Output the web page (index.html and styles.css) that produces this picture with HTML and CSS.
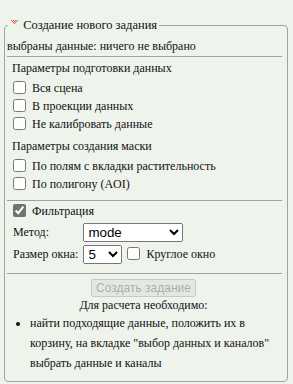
FILE: index.html
```html
<!DOCTYPE html>
<html>
<head>
    <meta charset="UTF-8">
    <meta name="viewport" content="width=device-width, initial-scale=1.0">
    <title>Создание нового задания</title>
    <link rel="stylesheet" href="styles.css">
</head>
<body>
    <div class="wrapper">
        <fieldset class="task-box">
            <legend class="task-legend">
                <svg class="toggle-icon" width="8" height="5" viewBox="0 0 8 5" shape-rendering="crispEdges">
                    <rect x="0" y="0" width="1" height="1" fill="#e8453c"/>
                    <rect x="2" y="0" width="1" height="1" fill="#e8453c"/>
                    <rect x="4" y="0" width="1" height="1" fill="#e8453c"/>
                    <rect x="6" y="0" width="1" height="1" fill="#e8453c"/>
                    <rect x="1" y="1" width="1" height="1" fill="#e8453c"/>
                    <rect x="3" y="1" width="1" height="1" fill="#e8453c"/>
                    <rect x="5" y="1" width="1" height="1" fill="#e8453c"/>
                    <rect x="2" y="2" width="1" height="1" fill="#e8453c"/>
                    <rect x="4" y="2" width="1" height="1" fill="#e8453c"/>
                    <rect x="3" y="3" width="1" height="1" fill="#e8453c"/>
                </svg>
                Создание нового задания
            </legend>

            <div class="selected">выбраны данные: ничего не выбрано</div>
            <hr class="sep">

            <div class="section">
                <div class="section-title">Параметры подготовки данных</div>
                <label class="check-row"><input type="checkbox"> Вся сцена</label>
                <label class="check-row"><input type="checkbox"> В проекции данных</label>
                <label class="check-row"><input type="checkbox"> Не калибровать данные</label>
            </div>

            <div class="section">
                <div class="section-title">Параметры создания маски</div>
                <label class="check-row"><input type="checkbox"> По полям с вкладки растительность</label>
                <label class="check-row"><input type="checkbox"> По полигону (AOI)</label>
            </div>
            <hr class="sep sep-wide">

            <div class="section">
                <label class="check-row"><input type="checkbox" class="gray-check" checked> Фильтрация</label>
                <div class="filter-grid">
                    <span>Метод:</span>
                    <select class="method-select">
                        <option>mode</option>
                        <option>median</option>
                    </select>
                    <span>Размер окна:</span>
                    <div class="window-row">
                        <select class="size-select">
                            <option>5</option>
                            <option>3</option>
                            <option>7</option>
                        </select>
                        <label class="round-label"><input type="checkbox"> Круглое окно</label>
                    </div>
                </div>
            </div>
            <hr class="sep sep-button">

            <div class="actions">
                <button type="button" disabled>Создать задание</button>
                <div class="need-title">Для расчета необходимо:</div>
            </div>
            <ul class="need-list">
                <li>найти подходящие данные, положить их в корзину, на вкладке "выбор данных и каналов" выбрать данные и каналы</li>
            </ul>
        </fieldset>
    </div>
</body>
</html>
```

FILE: styles.css
```css
body {
    margin: 0;
    background-color: #eef3ec;
    font-family: "Liberation Serif", "Times New Roman", serif;
    font-size: 12px;
    color: #111;
}
.wrapper {
    padding: 18px 5px 0 4px;
}
.task-box {
    margin: 0;
    border: 1px solid #a3a3a3;
    border-radius: 4px;
    padding: 5px 5px 8px 2px;
}
.task-legend {
    padding: 0 2px 0 3px;
    margin-left: 1px;
    font-size: 12.5px;
}
.toggle-icon {
    vertical-align: 4px;
    margin-right: 1px;
}
.selected {
    line-height: 16px;
}
.sep {
    border: 0;
    border-top: 1px solid #a3a3a3;
    margin: 2px 0 3px 0;
}
.sep-wide {
    margin: 7px 0 1px 0;
}
.sep-button {
    margin: 9px 0 5px 0;
}
.section {
    padding-left: 5px;
}
.section-title {
    line-height: 16px;
    margin-bottom: 3px;
}
.section + .section {
    margin-top: 5px;
}
.check-row {
    display: block;
    height: 18px;
    line-height: 18px;
}
.check-row input {
    margin: 0 3px 0 1px;
    vertical-align: -2px;
}
.gray-check {
    accent-color: #727272;
}
.filter-grid {
    display: grid;
    grid-template-columns: max-content auto;
    align-items: center;
    column-gap: 5px;
    row-gap: 3px;
    margin-top: 3px;
    margin-left: 1px;
    white-space: nowrap;
}
.method-select {
    width: 100px;
}
.window-row {
    display: flex;
    align-items: center;
}
.size-select {
    width: 39px;
}
.round-label input {
    margin: 0 3px 0 5px;
    vertical-align: -2px;
}
.actions {
    text-align: center;
    padding-right: 2px;
}
.actions button {
    font-family: "Liberation Sans", Arial, sans-serif;
    font-size: 12px;
    height: 18px;
    padding: 0 3px;
    vertical-align: top;
}
.need-title {
    line-height: 16px;
}
.need-list {
    margin: 0;
    padding-left: 23px;
    line-height: 20px;
}
```
